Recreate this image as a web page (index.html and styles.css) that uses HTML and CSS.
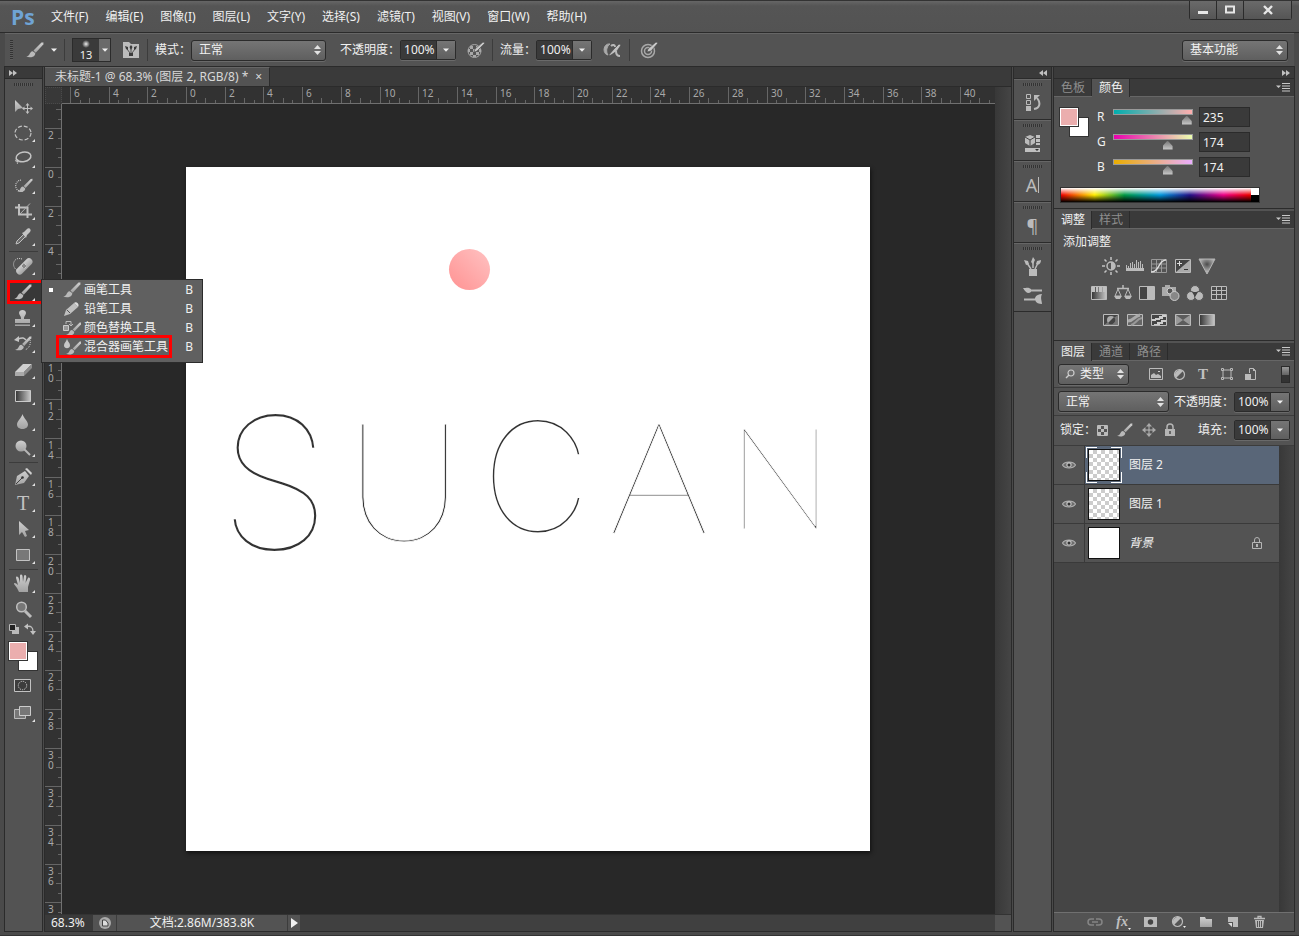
FILE: index.html
```html
<!DOCTYPE html>
<html lang="zh-CN">
<head>
  <meta charset="UTF-8" />
  <meta name="viewport" content="width=device-width, initial-scale=1.0"/>
  <title>未标题-1 @ 68.3%</title>
  <link rel="stylesheet" href="styles.css">
</head>
<body>
  <!-- shared icons -->
  <svg class="defs" width="0" height="0" aria-hidden="true">
    <defs>
      <linearGradient id="metal" x1="0" y1="0" x2="0" y2="1"><stop offset="0" stop-color="#cfcfcf"/><stop offset="1" stop-color="#a2a2a2"/></linearGradient>
      <linearGradient id="fade" x1="0" y1="0" x2="1" y2="0"><stop offset="0" stop-color="#333"/><stop offset="1" stop-color="#c8c8c8"/></linearGradient>
      <linearGradient id="ball" x1="0" y1="1" x2="1" y2="0"><stop offset="0" stop-color="#ff9292"/><stop offset="1" stop-color="#ffc2c2"/></linearGradient>
      <radialGradient id="well" cx=".5" cy=".35" r=".5"><stop offset="0" stop-color="#4c4c4c"/><stop offset="1" stop-color="#b4b4b4"/></radialGradient>
    </defs>
    <symbol id="i-brush" viewBox="0 0 18 16"><path d="M17.500.5 15.500.6 7.500 8.500l2.200 2.200L17.300 2.500z" fill="url(#metal)"/><path d="M6.800 9.200c-2.200 0-2.600 2-3.600 3.500C2.400 13.900 1.300 14.500 0 14.600c3.200 1.200 7.200 1 8.700-1.300.6-.9.7-1.600.4-2.200z" fill="#b9b9b9"/></symbol>
    <symbol id="i-corner" viewBox="0 0 4 4"><path d="M4 0v4H0z" fill="#e2e2e2"/></symbol>
    <symbol id="i-down" viewBox="0 0 6 4"><path d="M0 .5h6L3 3.800z" fill="#f0f0f0"/></symbol>
    <symbol id="i-updown" viewBox="0 0 7 10"><path d="M0 4h7L3.500 0zM0 6h7l-3.500 4z" fill="#e2e2e2"/></symbol>
    <symbol id="i-menu" viewBox="0 0 14 9"><path d="M0 2.500h5L2.500 5z" fill="#c8c8c8"/><path d="M6 .5h8M6 3h8M6 5.500h8M6 8h8" stroke="#c8c8c8"/></symbol>
    <symbol id="i-lock" viewBox="0 0 12 14"><path d="M3 6V4a3 3 0 0 1 6 0v2" fill="none" stroke="#b5b5b5" stroke-width="1.500"/><path d="M1 6h10v7H1z" fill="#b5b5b5"/><path d="M5.300 8h1.400v3H5.300z" fill="#444"/></symbol>
    <symbol id="i-eye" viewBox="0 0 14 10"><path d="M.5 5C3 1 11 1 13.500 5 11 9 3 9 .5 5z" fill="#6e6e6e" stroke="#b0b0b0" stroke-width="1.200"/><circle cx="7" cy="4.800" r="2.700" fill="#bdbdbd"/><circle cx="7" cy="5" r="1.500" fill="#333"/></symbol>
    <symbol id="i-half" viewBox="0 0 13 13"><circle cx="6.500" cy="6.500" r="5" fill="#555" stroke="#bbb" stroke-width="1.200"/><path d="M3 10A5 5 0 0 1 10 3z" fill="#bbb"/></symbol>
  </svg>

  <div class="app">
    <header class="menubar">
      <span class="logo">Ps</span>
      <nav class="menus">
        <a href="#">文件(F)</a>
        <a href="#">编辑(E)</a>
        <a href="#">图像(I)</a>
        <a href="#">图层(L)</a>
        <a href="#">文字(Y)</a>
        <a href="#">选择(S)</a>
        <a href="#">滤镜(T)</a>
        <a href="#">视图(V)</a>
        <a href="#">窗口(W)</a>
        <a href="#">帮助(H)</a>
      </nav>
      <div class="window-controls">
        <button aria-label="最小化"><svg width="12" height="10"><path d="M1 6h10v3H1z" fill="#e6e6e6"/></svg></button>
        <button aria-label="最大化"><svg width="12" height="10"><path d="M2 1.500h8v6H2z" fill="none" stroke="#e6e6e6" stroke-width="2"/></svg></button>
        <button class="close" aria-label="关闭"><svg width="12" height="10"><path d="M2 1l8 8M10 1L2 9" stroke="#e6e6e6" stroke-width="2.400"/></svg></button>
      </div>
    </header>

    <div class="options">
      <i class="grip-v"></i>
      <button class="tool-preset" aria-label="工具预设"><svg width="20" height="18"><use href="#i-brush" x="1" y="1" width="18" height="16"/></svg><svg width="6" height="4"><use href="#i-down"/></svg></button>
      <i class="divider"></i>
      <button class="brush-size"><span><b></b>13</span><i><svg width="6" height="4"><use href="#i-down"/></svg></i></button>
      <button class="icon" aria-label="画笔面板"><svg width="18" height="18"><path d="M1 1h6l2 2h8v14H1z" fill="#bcbcbc"/><path d="M5 8l3 4M9 7v5M13 8l-3 4" stroke="#555"/><path d="M3 5l3 1v3L4 8zM9 4l1.500 2L9 9 7.500 6zM15 5l-3 1v3l2-1zM7 12h4v3H7z" fill="#3c3c3c"/></svg></button>
      <i class="divider"></i>
      <label for="mode">模式：</label>
      <span class="select mode"><select id="mode"><option>正常</option></select><svg width="7" height="10"><use href="#i-updown"/></svg></span>
      <label class="gap" for="opacity">不透明度：</label>
      <span class="combo"><input id="opacity" type="text" value="100%"><button aria-label="不透明度滑块"><svg width="6" height="4"><use href="#i-down"/></svg></button></span>
      <button class="icon" aria-label="压力控制不透明度"><svg width="18" height="20"><circle cx="7.500" cy="11" r="6.500" fill="#555" stroke="#a8a8a8"/><path d="M3 6h3v3H3zM9 6h3v3H9zM6 9h3v3H6zM3 12h3v3H3zM1 9h2v3H1zM9 12h3v3H9zM12 9h2v3h-2zM6 15h3v2H6z" fill="#a8a8a8"/><path d="M7 12l1-3 8-7 2 1-8 8z" fill="#c8c8c8" stroke="#4a4a4a" stroke-width=".6"/></svg></button>
      <i class="divider"></i>
      <label for="flow">流量：</label>
      <span class="combo"><input id="flow" type="text" value="100%"><button aria-label="流量滑块"><svg width="6" height="4"><use href="#i-down"/></svg></button></span>
      <button class="icon" aria-label="喷枪"><svg width="19" height="20"><path d="M7 4C0 3-1 14 5 15c-2-3-2-8 2-11z" fill="#aaa" stroke="#aaa"/><path d="M5 16l6-7 5-5 2 1-4 6-6 4z" fill="#c2c2c2" stroke="#444" stroke-width=".6"/><path d="M8 6c2-2 4-1 4 1M13 11c0 3 1 5 4 5" fill="none" stroke="#b9b9b9" stroke-width="2"/></svg></button>
      <i class="divider"></i>
      <button class="icon" aria-label="压力控制大小"><svg width="20" height="20"><circle cx="8" cy="11" r="6.500" fill="none" stroke="#a8a8a8" stroke-width="1.500"/><circle cx="8" cy="11" r="3.500" fill="none" stroke="#a8a8a8" stroke-width="1.500"/><path d="M7 12l1-3 8-7 2 1-7 8z" fill="#c8c8c8" stroke="#4a4a4a" stroke-width=".6"/></svg></button>
      <span class="select workspace-select"><select aria-label="工作区"><option>基本功能</option></select><svg width="7" height="10"><use href="#i-updown"/></svg></span>
    </div>

    <main class="workspace">
      <aside class="toolbar">
        <div class="collapse"><svg width="8" height="6"><path d="M0 0l4 3-4 3zM4 0l4 3-4 3z" fill="#c0c0c0"/></svg></div>
        <div class="grip"></div>
        <div class="tools">
          <button aria-label="移动工具"><svg width="36" height="26"><path d="M10 6v12l3-3 5-1z" fill="url(#metal)"/><path d="M22.500 10v9M18 14.500h9" stroke="#c0c0c0"/><path d="M20.500 11.500l2-2.500 2 2.500zM20.500 17.500l2 2.500 2-2.500zM19.500 12.500l-2.500 2 2.500 2zM25.500 12.500l2.500 2-2.500 2z" fill="#c0c0c0"/></svg></button>
          <button aria-label="椭圆选框工具"><svg width="36" height="26"><ellipse cx="18" cy="13" rx="8" ry="7" fill="none" stroke="#c4c4c4" stroke-width="1.200" stroke-dasharray="4 2"/><use href="#i-corner" x="27" y="19" width="3" height="3"/></svg></button>
          <button aria-label="套索工具"><svg width="36" height="26"><ellipse cx="18.500" cy="11" rx="7.500" ry="4.800" transform="rotate(-12 18 11)" fill="none" stroke="#c4c4c4" stroke-width="1.500"/><path d="M12 13c-3 1-1 4 1 2 1-2-2-2-1 0 1 1 1 2 0 3" fill="none" stroke="#c4c4c4"/><use href="#i-corner" x="27" y="19" width="3" height="3"/></svg></button>
          <button aria-label="快速选择工具"><svg width="36" height="26"><path d="M18 19c-9 2-10-11-1-11" fill="none" stroke="#d0d0d0" stroke-width="1.200" stroke-dasharray="1 1"/><use href="#i-brush" x="12" y="6" width="16" height="15"/><use href="#i-corner" x="27" y="19" width="3" height="3"/></svg></button>
          <button aria-label="裁剪工具"><svg width="36" height="26"><path d="M10 9.500h12.500V20M14 6v10.500h13" fill="none" stroke="#c0c0c0" stroke-width="2"/><path d="M15 16L25 5.500" stroke="#b0b0b0"/><use href="#i-corner" x="27" y="19" width="3" height="3"/></svg></button>
          <button aria-label="吸管工具"><svg width="36" height="26"><path d="M11 20l1-3 7-7 2 2-7 7-3 1z" fill="#6c6c6c" stroke="#c0c0c0"/><path d="M17 9l2-1 3-3c2-2 5 1 3 3l-3 3-1 3z" fill="#c4c4c4"/><use href="#i-corner" x="27" y="19" width="3" height="3"/></svg></button>
          <hr>
          <button aria-label="修复画笔工具"><svg width="36" height="26"><path d="M17 6c-9-3-11 8-5 11" fill="none" stroke="#d0d0d0" stroke-dasharray="1 1"/><rect x="9" y="10" width="20" height="7" rx="3.500" transform="rotate(-45 19 13)" fill="url(#metal)"/><path d="M16 13l3-3 3 3-3 3z" fill="#888" stroke="#ddd" stroke-dasharray="1 1"/><use href="#i-corner" x="27" y="19" width="3" height="3"/></svg></button>
          <button class="active" aria-label="画笔工具"><svg width="36" height="26"><use href="#i-brush" x="9" y="5" width="18" height="16"/><use href="#i-corner" x="27" y="19" width="3" height="3"/></svg></button>
          <button aria-label="仿制图章工具"><svg width="36" height="26"><path d="M16 13c0-2-2-3-2-5 0-4 7-4 7 0 0 2-2 3-2 5v1h6v4H10v-4h6zM10 19.500h15V21H10z" fill="url(#metal)"/><use href="#i-corner" x="27" y="19" width="3" height="3"/></svg></button>
          <button aria-label="历史记录画笔工具"><svg width="36" height="26"><path d="M13 8c5-2 6-1 8 1" fill="none" stroke="#c4c4c4" stroke-width="1.500"/><path d="M9 9l5-4v6z" fill="#c4c4c4"/><path d="M25 9c1 5-1 8-5 10" fill="none" stroke="#d0d0d0" stroke-dasharray="1 1"/><use href="#i-brush" x="10" y="5" width="17" height="15"/><use href="#i-corner" x="27" y="19" width="3" height="3"/></svg></button>
          <button aria-label="橡皮擦工具"><svg width="36" height="26"><path d="M10 15l8-8h9l-8 8z" fill="#d0d0d0"/><path d="M19 15l8-8v4l-8 8z" fill="#8a8a8a"/><path d="M10 15h9v4h-9z" fill="#aaa"/><use href="#i-corner" x="27" y="19" width="3" height="3"/></svg></button>
          <button aria-label="渐变工具"><svg width="36" height="26"><path d="M10.500 7.500h15v11h-15z" fill="url(#fade)" stroke="#cacaca"/><use href="#i-corner" x="27" y="19" width="3" height="3"/></svg></button>
          <button aria-label="模糊工具"><svg width="36" height="26"><path d="M17.500 5c1 4 5.500 7 5.500 10.500 0 6-11 6-11 0C12 12 16.500 9 17.500 5z" fill="url(#metal)"/><use href="#i-corner" x="27" y="19" width="3" height="3"/></svg></button>
          <button aria-label="减淡工具"><svg width="36" height="26"><circle cx="16" cy="11" r="5.500" fill="url(#metal)"/><path d="M19 14l6 6" stroke="#b6b6b6" stroke-width="2"/><use href="#i-corner" x="27" y="19" width="3" height="3"/></svg></button>
          <hr>
          <button aria-label="钢笔工具"><svg width="36" height="26"><path d="M10 21l2-9 8-5 4 5-5 7z" fill="url(#metal)"/><path d="M20 5l2-1 5 5-1 2z" fill="#d0d0d0"/><path d="M11 20l6-6" stroke="#444"/><circle cx="17.500" cy="13.500" r="1.300" fill="#333"/><use href="#i-corner" x="27" y="19" width="3" height="3"/></svg></button>
          <button aria-label="横排文字工具"><span class="glyph-t">T</span><svg width="36" height="26"><use href="#i-corner" x="27" y="19" width="3" height="3"/></svg></button>
          <button aria-label="路径选择工具"><svg width="36" height="26"><path d="M14 5v14l3-3 3 5 2-1-2-5 4-1z" fill="url(#metal)"/><use href="#i-corner" x="27" y="19" width="3" height="3"/></svg></button>
          <button aria-label="矩形工具"><svg width="36" height="26"><path d="M11.500 7.500h13v11h-13z" fill="#787878" stroke="#c2c2c2"/><use href="#i-corner" x="27" y="19" width="3" height="3"/></svg></button>
          <hr>
          <button aria-label="抓手工具"><svg width="36" height="26"><path d="M14 21l-2-4-3-4c0-2 2-1 4 1L11 7c0-2 2-2 3 1l1 4 0-7c0-2 2-2 2.500 0l.5 6 1-6c.5-2 2.500-1 2.300 1L20.500 12l2.500-5c1-1 2.500 0 2 2L23 16v5z" fill="url(#metal)"/><use href="#i-corner" x="27" y="19" width="3" height="3"/></svg></button>
          <button aria-label="缩放工具"><svg width="36" height="26"><circle cx="16.500" cy="10" r="4.800" fill="#777" stroke="#c0c0c0" stroke-width="1.500"/><path d="M20 14l6 6" stroke="#bdbdbd" stroke-width="3"/></svg></button>
        </div>
        <div class="color-reset">
          <button aria-label="默认颜色"><svg width="12" height="12"><path d="M4 4h7v7H4z" fill="#bbb"/><path d="M1.500 1.500h6v6h-6z" fill="#222" stroke="#bbb"/></svg></button>
          <button aria-label="切换颜色"><svg width="12" height="12"><path d="M3 3.500c4-1 6 1 6 5" fill="none" stroke="#c0c0c0" stroke-width="1.300"/><path d="M0 3.500l4-3v6zM6 8h6l-3 4z" fill="#c0c0c0"/></svg></button>
        </div>
        <div class="swatches"><button class="back" aria-label="背景色"></button><button class="front" aria-label="前景色"></button></div>
        <div class="tools">
          <button aria-label="快速蒙版"><svg width="36" height="26"><path d="M9.500 8.500h16v12h-16z" fill="#3d3d3d" stroke="#c2c2c2"/><circle cx="17.500" cy="14.500" r="4.200" fill="none" stroke="#ddd" stroke-dasharray="1 1"/></svg></button>
          <button aria-label="屏幕模式"><svg width="36" height="26"><path d="M9.500 12.500h11v9h-11z" fill="#777" stroke="#bbb"/><path d="M14.500 9.500h11v9h-11z" fill="#777" stroke="#ccc"/><use href="#i-corner" x="27" y="22" width="3" height="3"/></svg></button>
        </div>

        <div class="flyout">
          <button><i class="dot"></i><svg width="18" height="16"><use href="#i-brush"/></svg><span>画笔工具</span><kbd>B</kbd></button>
          <button><i></i><svg width="18" height="16"><path d="M1 15l2-6 8-7 4 4-8 7z" fill="#c0c0c0"/><path d="M11 2c2-2 6 1 4 4z" fill="#ddd"/><path d="M4 9l3 3" stroke="#555"/></svg><span>铅笔工具</span><kbd>B</kbd></button>
          <button><i></i><svg width="18" height="16"><path d="M.5 5.500h5v5h-5z" fill="#999" stroke="#ccc"/><path d="M3 4V1.500h5V6M6 4l2 2 2-2" fill="none" stroke="#bbb"/><use href="#i-brush" x="3" y="2" width="16" height="14"/></svg><span>颜色替换工具</span><kbd>B</kbd></button>
          <button class="marked"><i></i><svg width="18" height="16"><path d="M4 0c1 3 3 4 3 6.500C7 10 1 10 1 6.500 1 4 3 3 4 0z" fill="#c8c8c8"/><use href="#i-brush" x="3" y="2" width="16" height="14"/></svg><span>混合器画笔工具</span><kbd>B</kbd></button>
        </div>
      </aside>

      <section class="document">
        <div class="doc-tabs">
          <div class="doc-tab"><span>未标题-1 @ 68.3% (图层 2, RGB/8) *</span><button aria-label="关闭文档">×</button></div>
        </div>
        <div class="ruler-corner"></div>
        <svg class="ruler-x" id="ruler-x"></svg>
        <svg class="ruler-y" id="ruler-y"></svg>
        <div class="canvas">
          <div class="artboard" id="artboard">
            <svg viewBox="0 0 684 684">
              <circle cx="283.500" cy="102.500" r="20.500" fill="url(#ball)"/>
              <g class="lettering">
                <text class="wide" x="89" y="383" font-size="185">S</text>
                <text x="218" y="374" font-size="167">U</text>
                <text class="wide" x="350" y="365" font-size="153">C</text>
                <text x="473" y="366" font-size="156">A</text>
                <text x="594" y="362" font-size="142">N</text>
              </g>
            </svg>
          </div>
        </div>
        <div class="scroll-y"></div>
        <footer class="status">
          <input type="text" value="68.3%" aria-label="缩放">
          <button class="proxy" aria-label="预览"><svg width="14" height="14"><circle cx="7" cy="7" r="6" fill="#aaa"/><path d="M4.500 4v6H10V7L7.500 4z" fill="#ddd" stroke="#444"/></svg></button>
          <span class="doc-size">文档:2.86M/383.8K</span>
          <button class="more" aria-label="状态选项"><svg width="7" height="10"><path d="M0 0l7 5-7 5z" fill="#f0f0f0"/></svg></button>
          <span class="scroll-x"></span>
          <span class="size-corner"></span>
        </footer>
      </section>

      <aside class="dock">
        <div class="collapse"><svg width="8" height="6"><path d="M4 0L0 3l4 3zM8 0L4 3l4 3z" fill="#c0c0c0"/></svg></div>
        <div class="dock-group"><div class="grip"></div><button aria-label="历史记录"><svg width="20" height="20"><path d="M3.500 1.500h4v4h-4zM3.500 7.500h4v4h-4z" fill="none" stroke="#bbb"/><path d="M3 13h5v5H3z" fill="#bbb"/><path d="M11 16c6-1 7-6 3-11" fill="none" stroke="#bbb" stroke-width="2"/><path d="M11 8V2h6z" fill="#bbb"/></svg></button></div>
        <div class="dock-group"><div class="grip"></div><button aria-label="属性"><svg width="20" height="20"><path d="M7 1l5 2v6l-5 3-5-3V3z" fill="#bbb"/><path d="M2 3l5 3 5-3M7 6v6" fill="none" stroke="#444"/><path d="M13 1h4v3h-4zM13 5h4v3h-4zM13 9h4v2h-4zM2 14h15v4H2z" fill="#c0c0c0"/><path d="M12 15h4l-2 2z" fill="#333"/></svg></button></div>
        <div class="dock-group"><div class="grip"></div><button aria-label="字符" class="char">A<i></i></button></div>
        <div class="dock-group"><div class="grip"></div><button aria-label="段落" class="char">¶</button></div>
        <div class="dock-group"><div class="grip"></div>
          <button aria-label="画笔"><svg width="20" height="20"><path d="M6 12h8v7H6z" fill="#bbb"/><path d="M8 12L4 6M10 11V5M12 12l3-6" stroke="#bbb" stroke-width="1.500"/><path d="M1 3l4 1 1 3-3 1zM10 0l2 3-2 4-2-2zM18 3l-4 1-1 3c3 2 5-1 5-4z" fill="#bbb"/></svg></button>
          <button aria-label="画笔预设"><svg width="20" height="20"><path d="M8 5.500h11M1 14.500h11" stroke="#b8b8b8" stroke-width="2"/><path d="M0 3c4 0 5-1 8 1v3C5 9 3 8 0 3zM12 13c1-3 4-4 7-4-2 4 0 7 0 10-3 0-6-1-7-4z" fill="#bbb"/></svg></button>
        </div>
      </aside>

      <aside class="panels">
        <div class="collapse end"><svg width="8" height="6"><path d="M0 0l4 3-4 3zM4 0l4 3-4 3z" fill="#c0c0c0"/></svg></div>

        <section class="panel color-panel">
          <div class="tabs"><button>色板</button><button class="on">颜色</button><button class="panel-menu" aria-label="面板菜单"><svg width="14" height="9"><use href="#i-menu"/></svg></button></div>
          <div class="color-body">
            <div class="swatches"><button class="back" aria-label="背景色"></button><button class="front" aria-label="前景色"></button></div>
            <div class="channels">
              <div class="channel"><label for="r">R</label><input class="slider red" type="range" max="255" value="235" aria-label="R"><input id="r" type="text" value="235"></div>
              <div class="channel"><label for="g">G</label><input class="slider green" type="range" max="255" value="174" aria-label="G"><input id="g" type="text" value="174"></div>
              <div class="channel"><label for="b">B</label><input class="slider blue" type="range" max="255" value="174" aria-label="B"><input id="b" type="text" value="174"></div>
            </div>
          </div>
          <div class="spectrum"><i></i></div>
        </section>

        <section class="panel adjust-panel">
          <div class="tabs"><button class="on">调整</button><button>样式</button><button class="panel-menu" aria-label="面板菜单"><svg width="14" height="9"><use href="#i-menu"/></svg></button></div>
          <p>添加调整</p>
          <div class="adjust-row">
            <button aria-label="亮度/对比度"><svg width="18" height="18"><circle cx="9" cy="9" r="4" fill="none" stroke="#bbb" stroke-width="1.500"/><path d="M9 5a4 4 0 0 1 0 8z" fill="#bbb"/><path d="M9 0v3M9 15v3M0 9h3M15 9h3M2.500 2.500l2 2M13.500 13.500l2 2M2.500 15.500l2-2M13.500 4.500l2-2" stroke="#c4c4c4" stroke-width="1.500"/></svg></button>
            <button aria-label="色阶"><svg width="18" height="18"><path d="M0 11h18v3H0z" fill="#bbb"/><path d="M.5 8v4M2.500 9v3M4.500 6v6M6.500 5v7M8.500 7v5M10.500 3v9M12.500 5v7M14.500 4v8M16.500 7v5" stroke="#bbb"/></svg></button>
            <button aria-label="曲线"><svg width="18" height="18"><path d="M1.500 2.500h15v13h-15zM6.500 2v13M11.500 2v13M1 7h15M1 11h15" fill="none" stroke="#999"/><path d="M1 15c9 0 7-12 15-12" fill="none" stroke="#ddd" stroke-width="1.500"/></svg></button>
            <button aria-label="曝光度"><svg width="18" height="18"><path d="M1.500 2.500h15v13h-15z" fill="#444" stroke="#bbb"/><path d="M16 3v12H2z" fill="#aaa"/><path d="M3 6.500h5M5.500 4v5" stroke="#ddd"/><path d="M10 12.500h4" stroke="#333"/></svg></button>
            <button aria-label="自然饱和度"><svg width="18" height="18"><path d="M1 2h16L9 17z" fill="url(#well)" stroke="#b4b4b4"/></svg></button>
          </div>
          <div class="adjust-row">
            <button aria-label="色相/饱和度"><svg width="18" height="18"><path d="M1.500 2.500h15v13h-15z" fill="url(#fade)" stroke="#bbb"/><path d="M2 3h3v5H2zM6 3h2v5H6zM9 3h3v5H9zM13 3h3v5h-3z" fill="#c0c0c0"/></svg></button>
            <button aria-label="色彩平衡"><svg width="18" height="18"><path d="M9 1v4M3 4.500h12" stroke="#bbb" stroke-width="1.500"/><path d="M4 5l-3 7h6zM14 5l-3 7h6z" fill="none" stroke="#bbb"/><path d="M0 12h8l-2 3H2zM10 12h8l-2 3h-4z" fill="#bbb"/></svg></button>
            <button aria-label="黑白"><svg width="18" height="18"><path d="M1.500 2.500h15v13h-15z" fill="#454545" stroke="#bbb"/><path d="M9 3h7v12H9z" fill="#bbb"/></svg></button>
            <button aria-label="照片滤镜"><svg width="18" height="18"><path d="M0 3h3V1h5v2h6v9H0z" fill="#aaa"/><circle cx="8" cy="7" r="3" fill="#555" stroke="#ccc"/><circle cx="12.500" cy="12" r="4.500" fill="#888" stroke="#ccc"/></svg></button>
            <button aria-label="通道混合器"><svg width="18" height="18"><circle cx="9" cy="6" r="4.500" fill="#bbb" stroke="#555"/><circle cx="5" cy="12" r="4.500" fill="#bbb" stroke="#555"/><circle cx="13" cy="12" r="4.500" fill="#bbb" stroke="#555"/><path d="M6 8h6l-3 5z" fill="#444"/></svg></button>
            <button aria-label="颜色查找"><svg width="18" height="18"><path d="M1.500 2.500h15v13h-15z" fill="#4a4a4a" stroke="#bbb"/><path d="M6.500 2v13M11.500 2v13M2 6.500h15M2 10.500h15" stroke="#bbb"/></svg></button>
          </div>
          <div class="adjust-row">
            <button aria-label="反相"><svg width="18" height="18"><path d="M1.500 3.500h15v11h-15z" fill="#444" stroke="#bbb"/><path d="M2 14L16 4v10z" fill="#777"/><circle cx="9" cy="9" r="4" fill="#aaa"/><path d="M6 12a4 4 0 0 0 6-6z" fill="#444"/></svg></button>
            <button aria-label="色调分离"><svg width="18" height="18"><path d="M1.500 3.500h15v11h-15z" fill="#666" stroke="#bbb"/><path d="M2 10C8 10 8 5 14 4" fill="none" stroke="#aaa" stroke-width="3"/><path d="M5 14c5-1 5-6 11-7" fill="none" stroke="#999" stroke-width="2"/></svg></button>
            <button aria-label="阈值"><svg width="18" height="18"><path d="M1.500 3.500h15v11h-15z" fill="#444" stroke="#bbb"/><path d="M2 10V8h3V7h4V5h3V4h4v2h-3v2h-3v1H6v1zM4 14v-1h3v-2h4V9h5v2h-3v2h-3v1z" fill="#ccc"/></svg></button>
            <button aria-label="可选颜色"><svg width="18" height="18"><path d="M1.500 3.500h15v11h-15z" fill="#999" stroke="#bbb"/><path d="M2 4h14L9 9zM2 14h14L9 9z" fill="#5c5c5c"/></svg></button>
            <button aria-label="渐变映射"><svg width="18" height="18"><path d="M1.500 3.500h15v11h-15z" fill="url(#fade)" stroke="#bbb"/></svg></button>
          </div>
        </section>

        <section class="panel layers-panel">
          <div class="tabs"><button class="on">图层</button><button>通道</button><button>路径</button><button class="panel-menu" aria-label="面板菜单"><svg width="14" height="9"><use href="#i-menu"/></svg></button></div>
          <div class="filter-row">
            <span class="select kind"><svg class="search" width="10" height="10"><circle cx="6" cy="4" r="3" fill="none" stroke="#ccc" stroke-width="1.200"/><path d="M4 6L1 9" stroke="#ccc" stroke-width="1.500"/></svg><select aria-label="图层过滤"><option>类型</option></select><svg width="7" height="10"><use href="#i-updown"/></svg></span>
            <div class="filters">
              <button aria-label="像素图层"><svg width="14" height="14"><path d="M.5 1.500h13v11H.5z" fill="none" stroke="#bbb"/><path d="M2 11V8l3-2 2 2 2-1 3 2v2z" fill="#bbb"/><path d="M9 4h2v1H9z" fill="#ccc"/></svg></button>
              <button aria-label="调整图层"><svg width="13" height="13"><use href="#i-half"/></svg></button>
              <button aria-label="文字图层" class="small-t">T</button>
              <button aria-label="形状图层"><svg width="14" height="14"><path d="M3 3h8v8H3z" fill="none" stroke="#bbb"/><path d="M1.500 1.500h2v2h-2zM10.500 1.500h2v2h-2zM1.500 10.500h2v2h-2zM10.500 10.500h2v2h-2z" fill="#555" stroke="#bbb"/></svg></button>
              <button aria-label="智能对象"><svg width="14" height="14"><path d="M5.500 6V1.500h4l2 2v9H7" fill="none" stroke="#bbb"/><path d="M9 1v3h3zM1 7h6v6H1z" fill="#bbb"/></svg></button>
            </div>
            <button class="filter-switch" aria-label="过滤开关"></button>
          </div>
          <div class="blend-row">
            <span class="select blend"><select aria-label="混合模式"><option>正常</option></select><svg width="7" height="10"><use href="#i-updown"/></svg></span>
            <label for="layer-opacity">不透明度：</label>
            <span class="combo"><input id="layer-opacity" type="text" value="100%"><button aria-label="不透明度滑块"><svg width="6" height="4"><use href="#i-down"/></svg></button></span>
          </div>
          <div class="lock-row">
            <span class="lock-label">锁定：</span>
            <button aria-label="锁定透明像素"><svg width="13" height="14"><path d="M1.500 2.500h10v10h-10z" fill="#555" stroke="#bbb"/><path d="M2 3h3v3H2zM8 3h3v3H8zM5 6h3v3H5zM2 9h3v3H2zM8 9h3v3H8z" fill="#bbb"/></svg></button>
            <button aria-label="锁定图像像素"><svg width="17" height="14"><use href="#i-brush" width="16" height="14"/></svg></button>
            <button aria-label="锁定位置"><svg width="14" height="14"><path d="M7 2v10M2 7h10" stroke="#bbb"/><path d="M4 3.500L7 0l3 3.500zM4 10.500L7 14l3-3.500zM3.500 4L0 7l3.500 3zM10.500 4L14 7l-3.500 3z" fill="#aaa"/></svg></button>
            <button aria-label="锁定全部"><svg width="12" height="14"><use href="#i-lock"/></svg></button>
            <label class="fill" for="layer-fill">填充：</label>
            <span class="combo"><input id="layer-fill" type="text" value="100%"><button aria-label="填充滑块"><svg width="6" height="4"><use href="#i-down"/></svg></button></span>
          </div>
          <div class="layer-area">
            <ul class="layers">
              <li class="selected"><button class="eye" aria-label="可见性"><svg width="14" height="10"><use href="#i-eye"/></svg></button><span class="thumb clear"></span><span>图层 2</span></li>
              <li><button class="eye" aria-label="可见性"><svg width="14" height="10"><use href="#i-eye"/></svg></button><span class="thumb clear"></span><span>图层 1</span></li>
              <li><button class="eye" aria-label="可见性"><svg width="14" height="10"><use href="#i-eye"/></svg></button><span class="thumb"></span><em>背景</em><svg class="locked" width="12" height="14"><path d="M3.500 6V4a2.500 2.500 0 0 1 5 0v2M1.500 6.500h9v6h-9z" fill="none" stroke="#b5b5b5"/><path d="M5 8h2v3H5z" fill="#b5b5b5"/></svg></li>
            </ul>
            <div class="scroll-y"></div>
          </div>
          <footer class="layer-actions">
            <button aria-label="链接图层"><svg width="16" height="14"><path d="M7 4H4a3 3 0 0 0 0 6h3M9 4h3a3 3 0 0 1 0 6H9M5 7h6" fill="none" stroke="#858585" stroke-width="1.500"/></svg></button>
            <button aria-label="图层样式" class="fx">fx<svg width="3" height="2"><path d="M0 0h3L1.500 2z" fill="#eee"/></svg></button>
            <button aria-label="添加蒙版"><svg width="14" height="14"><path d="M0 2h13v10H0z" fill="#bbb"/><circle cx="6.500" cy="7" r="2.700" fill="#444"/></svg></button>
            <button aria-label="新建调整图层"><svg width="15" height="14"><use href="#i-half" width="13" height="13"/><path d="M12 11h3l-1.500 2z" fill="#eee"/></svg></button>
            <button aria-label="新建组"><svg width="14" height="14"><path d="M1 2h5l1 2h6v8H1z" fill="url(#metal)"/></svg></button>
            <button aria-label="新建图层"><svg width="14" height="14"><path d="M2 2h10v10H7V7H2z" fill="#bbb"/><path d="M2 8l4 4V8z" fill="#ddd"/></svg></button>
            <button aria-label="删除图层"><svg width="14" height="14"><path d="M1 3.500h11M5 3V1.500h3V3" fill="none" stroke="#bbb" stroke-width="1.300"/><path d="M2 5h9l-1 8H3z" fill="#bbb"/><path d="M4.500 6v6M6.500 6v6M8.500 6v6" stroke="#555"/></svg></button>
          </footer>
        </section>
      </aside>
    </main>
  </div>

  <script>
    // Rulers: one labelled step is two centimetres at the current zoom
    const STEP = 38.7;
    const NS = 'http://www.w3.org/2000/svg';

    function add(svg, name, attrs, text) {
      const el = document.createElementNS(NS, name);
      for (const key in attrs) el.setAttribute(key, attrs[key]);
      if (text) el.textContent = text;
      svg.appendChild(el);
    }

    function drawRuler(svg, origin, length, vertical) {
      svg.replaceChildren();
      const first = Math.floor(-origin / STEP);
      const last = Math.ceil((length - origin) / STEP);
      for (let n = first; n <= last; n++) {
        for (let q = 0; q < 4; q++) {
          const p = Math.round(origin + (n + q / 4) * STEP) + 0.5;
          const size = [16, 3, 5, 3][q];
          add(svg, 'path', { d: vertical ? `M${16 - size} ${p}H16` : `M${p} ${16 - size}V16` });
        }
        const at = Math.round(origin + n * STEP);
        if (at < 0 || at > length - 10) continue;
        const label = String(Math.abs(n * 2));
        if (vertical) {
          [...label].forEach((c, i) => {
            const y = at + 11 + i * 10;
            if (y < length) add(svg, 'text', { x: 3, y }, c);
          });
        } else {
          add(svg, 'text', { x: at + 4, y: 10 }, label);
        }
      }
    }

    function drawRulers() {
      const board = document.getElementById('artboard').getBoundingClientRect();
      const rx = document.getElementById('ruler-x');
      const ry = document.getElementById('ruler-y');
      const bx = rx.getBoundingClientRect();
      const by = ry.getBoundingClientRect();
      drawRuler(rx, board.left - bx.left, bx.width, false);
      drawRuler(ry, board.top - by.top, by.height, true);
    }

    drawRulers();
    window.addEventListener('resize', drawRulers);
  </script>
</body>
</html>
```
FILE: styles.css
```css
:root {
  --bg: #535353;
  --line: #2b2b2b;
  --edge: #666;
  --dark: #3a3a3a;
  --text: #f0f0f0;
  --pink: #ebaeae;
  --mark: #f00;
  --font: 'Noto Sans', 'Noto Sans CJK SC', sans-serif;
}

* {
  box-sizing: border-box;
}

body {
  margin: 0;
  background: var(--bg);
  color: var(--text);
  font: 12px/16px var(--font);
  overflow: hidden;
}

button, input, select {
  margin: 0;
  padding: 0;
  border: 0;
  background: none;
  color: inherit;
  font: inherit;
  outline: none;
}

svg {
  display: block;
  flex: none;
}

.defs {
  position: absolute;
}

.app {
  display: flex;
  flex-direction: column;
  height: 100vh;
  padding: 0 5px 4px;
  background: #4a4a4a;
  border-bottom: 1px solid #333;
}

/* Menu bar */
.menubar {
  display: flex;
  align-items: center;
  height: 33px;
  margin: 0 -5px;
  padding: 0 7px 0 11px;
  background: linear-gradient(#666 0, #555 5px, #535353);
  border-top: 1px solid #333;
  border-bottom: 1px solid var(--line);
}

.logo {
  width: 40px;
  color: #6fa3d4;
  font: bold 21px/28px 'Open Sans', sans-serif;
}

.menus {
  display: flex;
  gap: 17px;
}

.menus a {
  color: var(--text);
  text-decoration: none;
}

.window-controls {
  display: flex;
  align-self: flex-start;
  margin-left: auto;
  border: 1px solid var(--line);
  border-top: 0;
  border-radius: 0 0 3px 3px;
}

.window-controls button {
  display: grid;
  place-items: center;
  width: 27px;
  height: 18px;
  background: linear-gradient(#6a6a6a, #555);
  border-right: 1px solid var(--line);
}

.window-controls .close {
  width: 47px;
  border: 0;
}

/* Options bar */
.options {
  display: flex;
  align-items: center;
  height: 34px;
  padding: 0 6px 0 5px;
  background: var(--bg);
  border-top: 1px solid var(--edge);
  border-bottom: 1px solid var(--line);
}

.grip-v {
  width: 3px;
  height: 20px;
  background: repeating-linear-gradient(#333 0 1px, #5c5c5c 1px 2px);
}

.tool-preset {
  display: flex;
  align-items: center;
  gap: 6px;
  margin-left: 12px;
}

.divider {
  width: 1px;
  height: 22px;
  margin: 0 7px;
  background: #3c3c3c;
}

.brush-size {
  display: flex;
  width: 39px;
  height: 24px;
  background: var(--dark);
  border: 1px solid var(--line);
  font-size: 11px;
  line-height: 12px;
}

.brush-size span {
  flex: 1;
}

.brush-size b {
  display: block;
  width: 8px;
  height: 8px;
  margin: 1px auto;
  border-radius: 50%;
  background: radial-gradient(#eee, transparent 70%);
}

.brush-size i {
  display: grid;
  place-items: center;
  width: 11px;
  background: #6a6a6a;
}

.icon {
  margin-left: 11px;
}

.divider + .icon {
  margin-left: 3px;
}

.select {
  position: relative;
  display: flex;
  align-items: center;
  height: 21px;
  background: linear-gradient(#757575, #5f5f5f);
  border: 1px solid var(--line);
  border-radius: 3px;
  box-shadow: 0 1px #6a6a6a;
}

.select select {
  appearance: none;
  width: 100%;
  height: 19px;
  padding: 0 16px 0 7px;
}

.select > svg:last-child {
  position: absolute;
  right: 4px;
  pointer-events: none;
}

.mode {
  width: 135px;
}

.gap {
  margin-left: 14px;
}

.combo {
  display: flex;
  flex: none;
  width: 56px;
  height: 20px;
  border: 1px solid var(--line);
  border-radius: 2px;
  box-shadow: 0 1px #6a6a6a;
}

.combo input {
  width: 35px;
  padding-left: 3px;
  background: var(--dark);
}

.combo button {
  display: grid;
  place-items: center;
  flex: 1;
  background: linear-gradient(#757575, #5f5f5f);
  border-left: 1px solid var(--line);
}

.workspace-select {
  width: 106px;
  margin-left: auto;
}

/* Workspace columns */
.workspace {
  display: grid;
  grid-template-columns: 37px minmax(0, 1fr) 37px 240px;
  gap: 3px;
  flex: 1;
  min-height: 0;
}

.toolbar, .dock, .panels, .document {
  background: var(--bg);
  box-shadow: 0 0 0 1px var(--line);
  min-height: 0;
}

.collapse {
  display: flex;
  align-items: center;
  height: 12px;
  padding: 0 4px;
  background: var(--dark);
  border-bottom: 1px solid var(--line);
}

.collapse.end {
  justify-content: flex-end;
}

.dock .collapse {
  justify-content: flex-end;
}

.grip {
  height: 3px;
  margin: 4px 9px 8px;
  background: repeating-linear-gradient(90deg, #333 0 1px, #5c5c5c 1px 2px);
}

/* Toolbar */
.toolbar {
  position: relative;
}

.tools button {
  display: flex;
  width: 37px;
  height: 26px;
}

.tools hr {
  height: 1px;
  margin: 1px 4px;
  border: 0;
  background: #3c3c3c;
}

.tools .active {
  background: #383838;
  outline: 3px solid var(--mark);
  outline-offset: -3px;
  height: 24px;
  margin: 1px 0 1px 2px;
}

.tools .active svg {
  margin: -1px 0 0 -2px;
}

.glyph-t {
  width: 36px;
  margin-right: -36px;
  color: #c2c2c2;
  font: 20px/26px 'Liberation Serif', serif;
}

.color-reset {
  display: flex;
  justify-content: space-between;
  align-items: flex-start;
  height: 18px;
  padding: 0 6px 0 3px;
}

.swatches {
  position: relative;
  width: 30px;
  height: 30px;
}

.toolbar .swatches {
  margin: 0 3px;
}

.swatches button {
  position: absolute;
  width: 20px;
  height: 20px;
  border: 1px solid #333;
  background: #fff;
}

.swatches .back {
  right: 0;
  bottom: 0;
}

.swatches .front {
  left: 0;
  top: 0;
  background: var(--pink);
  box-shadow: inset 0 0 0 1px #fff;
}

.flyout {
  position: absolute;
  z-index: 2;
  top: 212px;
  left: 36px;
  width: 162px;
  padding-bottom: 6px;
  background: #606060;
  border: 1px solid var(--line);
}

.flyout button {
  display: flex;
  align-items: center;
  width: 100%;
  height: 19px;
  padding: 0 9px 0 7px;
  text-align: left;
}

.flyout i {
  width: 4px;
  height: 4px;
  margin-right: 10px;
}

.flyout .dot {
  background: #fff;
}

.flyout span {
  margin-left: 3px;
  white-space: nowrap;
}

.flyout kbd {
  margin-left: auto;
  font: inherit;
}

.flyout .marked {
  position: relative;
}

.flyout .marked::after {
  content: '';
  position: absolute;
  inset: -2px 30px -2px 14px;
  border: 3px solid var(--mark);
}

/* Document */
.document {
  display: grid;
  grid-template: 20px 17px minmax(0, 1fr) 17px / 17px minmax(0, 1fr) 16px;
}

.doc-tabs {
  grid-column: 1 / -1;
  display: flex;
  background: var(--dark);
  border-bottom: 1px solid var(--line);
}

.doc-tab {
  display: flex;
  align-items: center;
  gap: 7px;
  padding: 0 7px 0 10px;
  background: var(--bg);
  border-top: 1px solid var(--edge);
  border-right: 1px solid var(--line);
  color: #d8d8d8;
}

.ruler-corner {
  background: #383838;
  border: 1px dotted #4a4a4a;
}

.ruler-x, .ruler-y {
  width: 100%;
  height: 100%;
  background: #323232;
  stroke: #666;
  overflow: hidden;
}

.ruler-x {
  border-bottom: 1px solid #707070;
}

.ruler-y {
  border-right: 1px solid #707070;
}

.ruler-x text, .ruler-y text {
  fill: #a8a8a8;
  stroke: none;
  font: 10px 'Noto Sans', sans-serif;
}

.ruler-y {
  grid-row: 3;
}

.canvas {
  display: grid;
  place-content: center;
  padding-right: 1px;
  background: #282828;
  overflow: hidden;
}

.artboard {
  width: 684px;
  height: 684px;
  background: #fff;
  box-shadow: 1px 2px 4px #111;
}

/* White stroke eats into the fill and leaves a hairline */
.lettering {
  fill: #333;
  stroke: #fff;
  stroke-width: .8;
  font-family: 'Lato', sans-serif;
  font-weight: 100;
  text-anchor: middle;
}

.lettering .wide {
  font-family: 'Inter', sans-serif;
  stroke-width: 2;
}

.scroll-y {
  background: linear-gradient(90deg, #383838, #454545);
}

.document > .scroll-y {
  grid-column: 3;
  grid-row: 2 / 4;
}

.status {
  grid-column: 1 / -1;
  display: flex;
  background: #404040;
  border-top: 1px solid #333;
}

.status input {
  width: 48px;
  padding-left: 6px;
  background: var(--dark);
}

.status button {
  display: grid;
  place-items: center;
  background: var(--bg);
}

.proxy {
  width: 23px;
}

.doc-size {
  width: 172px;
  border: 1px solid #3c3c3c;
  border-width: 0 1px;
  background: var(--bg);
  text-align: center;
}

.more {
  width: 12px;
}

.scroll-x {
  flex: 1;
}

.size-corner {
  width: 16px;
  background: var(--bg);
}

/* Icon dock */
.dock-group {
  padding-bottom: 4px;
  border-top: 1px solid var(--edge);
  border-bottom: 1px solid var(--line);
}

.dock-group .grip {
  margin-top: 3px;
  margin-bottom: 4px;
}

.dock-group button {
  display: flex;
  align-items: center;
  justify-content: center;
  width: 100%;
  height: 25px;
}

.dock-group button + button {
  margin-top: 3px;
}

.dock-group .char {
  color: #bbb;
  font-size: 18px;
}

.char i {
  width: 1px;
  height: 16px;
  margin-left: 1px;
  background: #bbb;
}

/* Panels */
.panels {
  display: flex;
  flex-direction: column;
}

.panel {
  border-bottom: 1px solid var(--line);
}

.tabs {
  display: flex;
  height: 18px;
  background: var(--dark);
  border-bottom: 1px solid var(--edge);
}

.tabs button {
  padding: 0 6px 0 7px;
  border-right: 1px solid var(--line);
  color: #8e8e8e;
}

.tabs .on {
  height: 18px;
  background: var(--bg);
  color: var(--text);
}

.tabs .panel-menu {
  margin-left: auto;
  padding: 0 4px;
  border: 0;
}

.color-panel {
  height: 130px;
  margin-bottom: 2px;
}

.color-body {
  display: flex;
  padding: 10px 4px 0;
}

.color-body .swatches {
  margin-left: 1px;
}

.channels {
  margin-left: 8px;
}

.channel {
  display: flex;
  align-items: center;
  height: 20px;
  margin-bottom: 5px;
}

.channel label {
  width: 11px;
}

.channel input[type="text"] {
  width: 51px;
  height: 20px;
  margin-left: 1px;
  padding-left: 3px;
  background: var(--dark);
  border: 1px solid var(--line);
}

.slider {
  appearance: none;
  width: 90px;
  height: 16px;
  background: linear-gradient(90deg, var(--from), var(--to)) 6px 1px / 78px 4px no-repeat, linear-gradient(#999, #999) 5px 0 / 80px 6px no-repeat;
}

.slider::-webkit-slider-thumb {
  appearance: none;
  width: 10px;
  height: 9px;
  margin-top: 6px;
  background: linear-gradient(#777, #ccc);
  clip-path: polygon(50% 0, 100% 60%, 100% 100%, 0 100%, 0 60%);
}

.red {
  --from: #00aeae;
  --to: #ffaeae;
}

.green {
  --from: #eb00ae;
  --to: #ebffae;
}

.blue {
  --from: #ebae00;
  --to: #ebaeff;
}

.spectrum {
  display: flex;
  justify-content: flex-end;
  width: 200px;
  height: 16px;
  margin: 5px 0 0 6px;
  border: 1px solid #333;
  background: linear-gradient(#fff, transparent 50%, #000), linear-gradient(90deg, #e00 0, #fe0 17%, #094 32%, #09d 50%, #218 65%, #e08 82%, #e00 95%);
}

.spectrum i {
  width: 8px;
  background: linear-gradient(#fff 50%, #000 50%);
}

.adjust-panel {
  height: 130px;
  margin-bottom: 2px;
}

.adjust-panel p {
  margin: 5px 9px 7px;
}

.adjust-row {
  display: flex;
  justify-content: center;
  gap: 6px;
  width: 210px;
  margin-bottom: 9px;
}

.layers-panel {
  display: flex;
  flex-direction: column;
  flex: 1;
  min-height: 0;
  border: 0;
}

.filter-row, .blend-row, .lock-row {
  display: flex;
  align-items: center;
  height: 28px;
  padding: 0 4px;
  border-bottom: 1px solid #3c3c3c;
}

.filter-row {
  height: 27px;
}

.kind {
  width: 71px;
}

.search {
  position: absolute;
  left: 6px;
}

.kind select {
  padding-left: 21px;
}

.filters {
  display: flex;
  align-items: center;
  gap: 10px;
  margin-left: 20px;
}

.small-t {
  width: 14px;
  color: #c0c0c0;
  font: bold 15px/16px 'Liberation Serif', serif;
}

.filter-switch {
  width: 9px;
  height: 17px;
  margin-left: auto;
  border: 1px solid var(--line);
  background: linear-gradient(#999, #666 50%, #333 50%);
}

.blend {
  width: 111px;
}

.blend-row label {
  margin-left: auto;
}

.lock-row {
  gap: 8px;
  height: 30px;
  padding: 0 4px 2px 6px;
}

.lock-label {
  margin-right: -8px;
}

.fill {
  margin-left: auto;
  margin-right: -8px;
}

.layer-area {
  display: grid;
  grid-template-columns: minmax(0, 1fr) 15px;
  flex: 1;
  background: #454545;
}

.layers {
  margin: 0;
  padding: 0;
  list-style: none;
}

.layers li {
  display: flex;
  align-items: center;
  height: 39px;
  background: var(--bg);
  border-bottom: 1px solid #3a3a3a;
}

.layers .selected {
  background: linear-gradient(90deg, var(--bg) 30px, #596678 30px);
}

.eye {
  display: grid;
  place-items: center;
  width: 31px;
  height: 100%;
  border-right: 1px solid #3a3a3a;
}

.thumb {
  position: relative;
  width: 32px;
  height: 32px;
  margin: 0 9px 0 3px;
  background: #fff;
  border: 1px solid #111;
}

.clear {
  background: repeating-conic-gradient(#ccc 0 25%, #fff 0 50%) 0 0 / 8px 8px;
}

/* corner brackets around the active layer thumbnail */
.selected .thumb::after {
  content: '';
  position: absolute;
  inset: -3px;
  border: 1px solid #fff;
  mask: linear-gradient(90deg, #000 11px, transparent 11px 25px, #000 25px), linear-gradient(#000 11px, transparent 11px 25px, #000 25px);
  mask-composite: intersect;
}

.locked {
  margin-left: auto;
  margin-right: 16px;
}

.layer-actions {
  display: flex;
  align-items: center;
  justify-content: flex-end;
  gap: 13px;
  height: 19px;
  padding-right: 27px;
  border-top: 1px solid #707070;
}

.fx {
  display: flex;
  align-items: flex-end;
  color: #c0c0c0;
  font: italic bold 14px/16px 'Liberation Serif', serif;
}
```
